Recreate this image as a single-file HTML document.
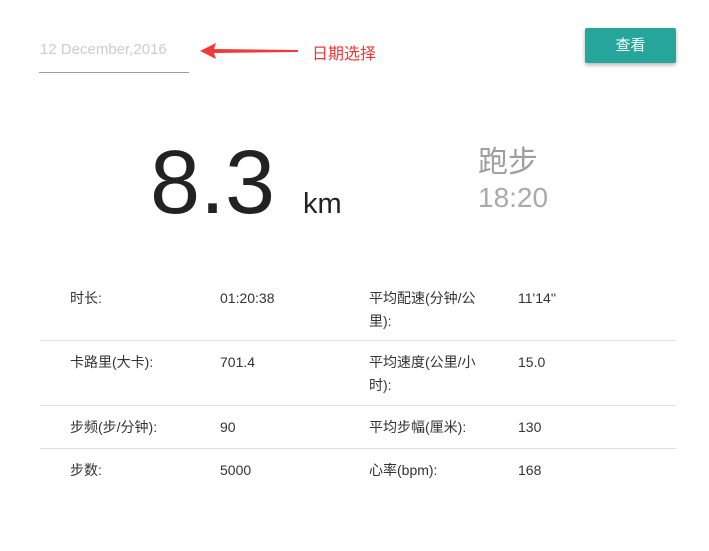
<!DOCTYPE html>
<html><head><meta charset="utf-8"><style>
body{margin:0;width:709px;height:551px;background:#fff;font-family:"Liberation Sans","Noto Sans CJK SC",sans-serif;position:relative;overflow:hidden}
.a{position:absolute;white-space:nowrap}
.t{font-size:14px;color:#333;line-height:22px}
.hr{position:absolute;left:40px;width:636px;height:1px;background:#e0e0e0}
</style></head><body>
<div class="a" style="left:40px;top:41px;font-size:15px;color:#ccc">12 December,2016</div>
<div class="a" style="left:39px;top:72px;width:150px;height:1px;background:#9e9e9e"></div>
<svg class="a" style="left:198px;top:42px" width="104" height="20"><polygon points="2,9 18,1 16,7 100,8 100,10 16,11 18,17" fill="#f03a3a"/></svg>
<div class="a" style="left:312px;top:40px;font-size:16px;color:#f03a3a">日期选择</div>
<div class="a" style="left:585px;top:28px;width:91px;height:35px;background:#26a69a;border-radius:2px;box-shadow:0 2px 4px rgba(0,0,0,.3);color:#fff;font-size:15px;line-height:35px;text-align:center">查看</div>
<div class="a" style="left:150px;top:133px;font-size:90px;line-height:100px;color:#222">8.3</div>
<div class="a" style="left:303px;top:188px;font-size:29px;color:#222">km</div>
<div class="a" style="left:478px;top:137px;font-size:30px;color:#9e9e9e">跑步</div>
<div class="a" style="left:478px;top:182px;font-size:28px;color:#aaa">18:20</div>
<div class="a t" style="left:70px;top:287px">时长:</div>
<div class="a t" style="left:220px;top:287px">01:20:38</div>
<div class="a t" style="left:369px;top:287px;line-height:23px">平均配速(分钟/公<br>里):</div>
<div class="a t" style="left:518px;top:287px">11'14''</div>
<div class="hr" style="top:340px"></div>
<div class="a t" style="left:70px;top:351px">卡路里(大卡):</div>
<div class="a t" style="left:220px;top:351px">701.4</div>
<div class="a t" style="left:369px;top:351px;line-height:23px">平均速度(公里/小<br>时):</div>
<div class="a t" style="left:518px;top:351px">15.0</div>
<div class="hr" style="top:405px"></div>
<div class="a t" style="left:70px;top:416px">步频(步/分钟):</div>
<div class="a t" style="left:220px;top:416px">90</div>
<div class="a t" style="left:369px;top:416px">平均步幅(厘米):</div>
<div class="a t" style="left:518px;top:416px">130</div>
<div class="hr" style="top:448px"></div>
<div class="a t" style="left:70px;top:459px">步数:</div>
<div class="a t" style="left:220px;top:459px">5000</div>
<div class="a t" style="left:369px;top:459px">心率(bpm):</div>
<div class="a t" style="left:518px;top:459px">168</div>
</body></html>
